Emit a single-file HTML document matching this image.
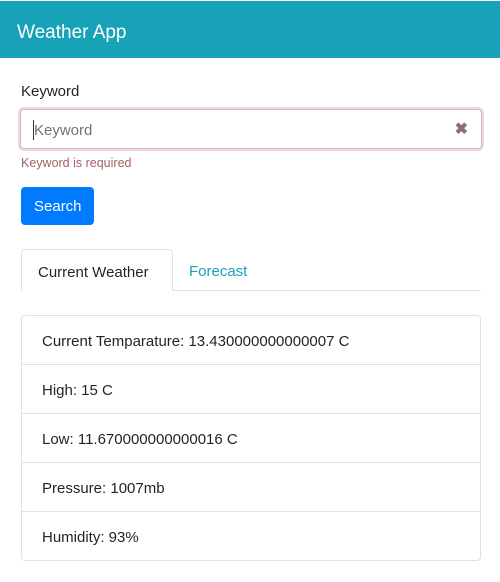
<!DOCTYPE html>
<html><head><style>
*{box-sizing:border-box;margin:0;padding:0}
body{width:500px;height:582px;background:#fff;font-family:"Liberation Sans",sans-serif;color:#212529;position:relative;overflow:hidden}
.hdr{position:absolute;left:0;top:1px;width:500px;height:57px;background:#17a2b8;color:#fff;font-size:19px;padding:21px 0 0 17px}
.lbl{position:absolute;left:21px;top:83px;font-size:15px}
.inp{position:absolute;left:20px;top:109px;width:462px;height:40px;border:1px solid #d9b7ba;border-radius:4px;box-shadow:0 0 0 2px #f0d6d8}
.inp span{position:absolute;left:13px;top:12px;font-size:15px;color:#6c757d}
.inp i{position:absolute;left:12px;top:10px;width:1px;height:20px;background:#333}
.inp b{position:absolute;right:13px;top:9px;font-size:16px;color:#8a6f72}
.err{position:absolute;left:21px;top:156px;font-size:12.5px;color:#a56167}
.btn{position:absolute;left:21px;top:187px;width:73px;height:38px;background:#007bff;border-radius:4px;color:#fff;font-size:15px;padding:11px 0 0 13px}
.tabline{position:absolute;left:21px;top:290px;width:460px;height:1px;background:#dee2e6}
.tab{position:absolute;left:21px;top:249px;width:152px;height:42px;border:1px solid #dee2e6;border-bottom:1px solid #fff;border-radius:4px 4px 0 0;background:#fff;font-size:15px;padding:14px 0 0 16px}
.tab2{position:absolute;left:189px;top:263px;font-size:15px;color:#17a2b8}
.list{position:absolute;left:21px;top:315px;width:460px;height:246px;border:1px solid #dee2e6;border-radius:4px}
.row{height:49px;border-bottom:1px solid #dee2e6;font-size:15px;padding:17px 0 0 20px}
.row:last-child{border-bottom:0}
</style></head><body>
<div class="hdr">Weather App</div>
<div class="lbl">Keyword</div>
<div class="inp"><i></i><span>Keyword</span><b>✖</b></div>
<div class="err">Keyword is required</div>
<div class="btn">Search</div>
<div class="tabline"></div>
<div class="tab">Current Weather</div>
<div class="tab2">Forecast</div>
<div class="list">
<div class="row">Current Temparature: 13.430000000000007 C</div>
<div class="row">High: 15 C</div>
<div class="row">Low: 11.670000000000016 C</div>
<div class="row">Pressure: 1007mb</div>
<div class="row">Humidity: 93%</div>
</div>
</body></html>
